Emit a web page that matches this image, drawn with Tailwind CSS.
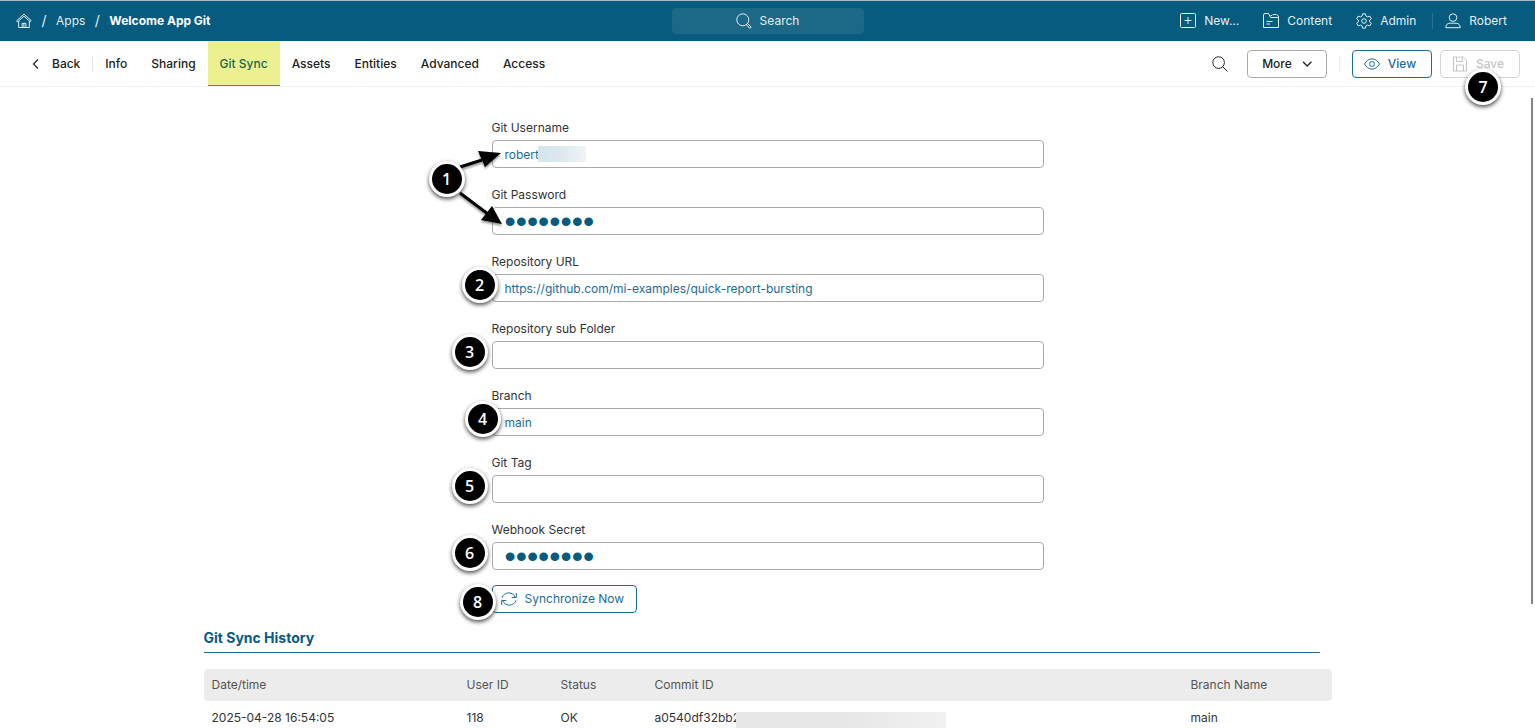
<!DOCTYPE html>
<html lang="en">

<head>
    <meta charset="UTF-8">
    <meta name="viewport" content="width=device-width, initial-scale=1.0">
    <title>Welcome App Git</title>
    <script src="https://cdn.jsdelivr.net/npm/@tailwindcss/browser@4"></script>
</head>

<body class="flex h-screen flex-col overflow-hidden bg-white font-['Inter',sans-serif] text-[13px] leading-5 text-[#333]">

    <!-- top bar -->
    <header class="grid h-[41px] shrink-0 grid-cols-[1fr_192px_1fr] items-center border-t border-[#a9bcc4] bg-[#075b7f] px-4 text-xs text-[#e6eff3]">
        <nav class="flex items-center" aria-label="Breadcrumb">
            <a href="#" aria-label="Home">
                <svg class="size-4" viewBox="0 0 16 16" fill="none" stroke="currentColor" stroke-linejoin="round" stroke-linecap="round">
                    <path d="M.8 7.6 8 1.2l7.2 6.4-1 1.1L8 3.2 1.8 8.7z" />
                    <path d="M2.7 8.6v5.9h3.4v-4.2h3.8v4.2h3.4V8.6M7.9 10.4v4M6 14.5h4" />
                </svg>
            </a>
            <span class="w-6 text-center text-sm">/</span>
            <a href="#">Apps</a>
            <span class="w-6 text-center text-sm">/</span>
            <a href="#" class="font-bold text-white">Welcome App Git</a>
        </nav>
        <button class="flex h-[26px] items-center justify-center gap-2 rounded-sm bg-[#1b6887]">
            <svg class="size-4" viewBox="0 0 16 16" fill="none" stroke="currentColor">
                <circle cx="6.8" cy="6.8" r="6" />
                <path d="m11.2 10.2 4 3.8-1.3 1.4-3.8-4" />
            </svg>
            Search
        </button>
        <div class="flex items-center justify-end gap-6 pr-3">
            <button class="flex items-center gap-2">
                <svg class="size-4" viewBox="0 0 16 16" fill="none" stroke="currentColor">
                    <rect x=".5" y=".5" width="15" height="14" rx="1" />
                    <path d="M8 4v7M4.5 7.5h7" />
                </svg>
                New...
            </button>
            <button class="flex items-center gap-2">
                <svg class="size-4" viewBox="0 0 16 16" fill="none" stroke="currentColor" stroke-linejoin="round">
                    <path d="M.5 14.5V2q0-1.500 1.500-1.500h3.500L7.500 4.500h8v10z" />
                    <path d="M7.500 2.500h1.500l1-1h3.500l2 1.500v1.500M3.500 8.500h6M3.500 11h3.500" />
                </svg>
                Content
            </button>
            <button class="flex items-center gap-2">
                <svg class="size-4" viewBox="0 0 16 16" fill="none" stroke="currentColor" stroke-linejoin="round">
                    <path d="m6.6.8-.6 2.3-1.4.8-2.5-.7L.7 5.7 2.4 7.2v1.6L.7 10.3l1.4 2.5 2.5-.7 1.4.8.6 2.3h2.8l.6-2.3 1.4-.8 2.5.7 1.4-2.5-1.7-1.5V7.2l1.7-1.5-1.4-2.5-2.5.7-1.4-.8L9.4.8z" />
                    <circle cx="8" cy="8" r="2.3" />
                </svg>
                Admin
            </button>
            <button class="flex items-center gap-2">
                <span class="-ml-2 mr-1 h-4 w-px bg-[#2a7394]"></span>
                <svg class="size-4" viewBox="0 0 16 16" fill="none" stroke="currentColor" stroke-linejoin="round">
                    <circle cx="8" cy="4.6" r="3.8" />
                    <path d="M.8 14.7c0-2.6 1.5-4.5 4-4.5h6.4c2.5 0 4 1.9 4 4.5z" />
                </svg>
                Robert
            </button>
        </div>
    </header>

    <!-- tabs and page actions -->
    <div class="flex h-[46px] shrink-0 items-center justify-between border-b border-[#f0f0f0] pr-[15px] pl-7 text-xs font-medium text-[#222]">
        <nav class="flex h-full items-center">
            <a href="#" class="flex items-center gap-2 pr-3">
                <svg class="size-4" viewBox="0 0 16 16" fill="none" stroke="currentColor" stroke-width="1.2">
                    <path d="m10 3.5-4.5 4.5 4.5 4.5" />
                </svg>
                Back
            </a>
            <span class="h-4 w-px bg-[#e5e5e5]"></span>
            <a href="#" class="px-3">Info</a>
            <a href="#" class="px-3">Sharing</a>
            <a href="#" class="flex h-full items-center bg-[#ebf190] px-3 text-[#14684f] shadow-[inset_0_-1px_0_#4b8f62]">Git Sync</a>
            <a href="#" class="px-3">Assets</a>
            <a href="#" class="px-3">Entities</a>
            <a href="#" class="px-3">Advanced</a>
            <a href="#" class="px-3">Access</a>
        </nav>
        <div class="flex items-center">
            <button class="mr-[19px]" aria-label="Find">
                <svg class="size-4" viewBox="0 0 16 16" fill="none" stroke="currentColor">
                    <circle cx="6.6" cy="6.6" r="5.8" />
                    <path d="m10.8 10.8 4.7 4.7" />
                </svg>
            </button>
            <button class="flex h-[28px] w-20 items-center justify-center gap-2 rounded-sm border border-[#aaa] pl-1">
                More
                <svg class="size-4" viewBox="0 0 16 16" fill="none" stroke="currentColor" stroke-width="1.3">
                    <path d="m3 5.800 4.200 4.200 4.200-4.200" />
                </svg>
            </button>
            <span class="mx-3 h-4 w-px bg-[#eee]"></span>
            <button class="mr-2 flex h-[28px] w-20 items-center justify-center gap-2 rounded-sm border border-[#1b6d90] pr-1 text-[#1b6d90]">
                <svg class="size-4" viewBox="0 0 16 16" fill="none" stroke="currentColor">
                    <path d="M.6 8C2.4 4.5 4.9 2.9 8 2.9s5.6 1.6 7.4 5.1c-1.8 3.5-4.3 5.1-7.4 5.1S2.4 11.5.6 8z" />
                    <circle cx="8" cy="8" r="2.4" />
                </svg>
                View
            </button>
            <div class="relative">
                <button class="flex h-[28px] w-20 items-center justify-center gap-2 rounded-sm border border-[#d5d5d5] pr-1 text-[#c4c4c4]" disabled>
                    <svg class="size-4" viewBox="0 0 16 16" fill="none" stroke="currentColor">
                        <path d="M1.5 1h9.8l3.2 3.2V15h-13zM4.5 1v4.5h5.8V1M4.5 15V9h7v6" />
                    </svg>
                    Save
                </button>
                <span class="absolute top-[19px] left-[25px] z-10 flex size-9 items-center justify-center rounded-full border-3 border-white bg-black font-['Open_Sans',sans-serif] text-base font-semibold text-white shadow-[0_2px_4px_rgba(0,0,0,0.7)]">7</span>
            </div>
        </div>
    </div>

    <main class="relative grow overflow-hidden px-4 pt-[33px]">
        <div class="absolute top-[11px] right-[2px] h-[506px] w-[2px] bg-[#858585]"></div>

        <form class="relative mx-auto flex max-w-[552px] flex-col gap-[19px]" action="" method="post">
            <div class="relative">
                <label for="username" class="block h-5 text-xs">Git Username</label>
                <input id="username" type="text" value="robert"
                    class="block h-[28px] w-full rounded-sm border border-[#aaa] px-3 text-xs text-[#1b6d90] focus:outline-none">
                <span class="absolute top-[26px] left-[46px] h-4 w-12 bg-linear-to-r from-[#d3e5ed] via-[#dde8ed] to-[#f0f4f6]"></span>
            </div>
            <div>
                <label for="password" class="block h-5 text-xs">Git Password</label>
                <input id="password" type="password" value="password"
                    class="block h-[28px] w-full rounded-sm border border-[#aaa] px-3 font-['Liberation_Sans',sans-serif] text-[32px] leading-none text-[#075b7f] focus:outline-none">
            </div>
            <div class="relative">
                <label for="url" class="block h-5 text-xs">Repository URL</label>
                <input id="url" type="text" value="https://github.com/mi-examples/quick-report-bursting"
                    class="block h-[28px] w-full rounded-sm border border-[#aaa] px-3 text-xs text-[#1b6d90] focus:outline-none">
                <span class="absolute top-[13px] -left-[30px] flex size-9 items-center justify-center rounded-full border-3 border-white bg-black font-['Open_Sans',sans-serif] text-base font-semibold text-white shadow-[0_2px_4px_rgba(0,0,0,0.7)]">2</span>
            </div>
            <div class="relative">
                <label for="folder" class="block h-5 text-xs">Repository sub Folder</label>
                <input id="folder" type="text"
                    class="block h-[28px] w-full rounded-sm border border-[#aaa] px-3 text-xs text-[#1b6d90] focus:outline-none">
                <span class="absolute top-[13px] -left-[40px] flex size-9 items-center justify-center rounded-full border-3 border-white bg-black font-['Open_Sans',sans-serif] text-base font-semibold text-white shadow-[0_2px_4px_rgba(0,0,0,0.7)]">3</span>
            </div>
            <div class="relative">
                <label for="branch" class="block h-5 text-xs">Branch</label>
                <input id="branch" type="text" value="main"
                    class="block h-[28px] w-full rounded-sm border border-[#aaa] px-3 text-xs text-[#1b6d90] focus:outline-none">
                <span class="absolute top-[13px] -left-[27px] flex size-9 items-center justify-center rounded-full border-3 border-white bg-black font-['Open_Sans',sans-serif] text-base font-semibold text-white shadow-[0_2px_4px_rgba(0,0,0,0.7)]">4</span>
            </div>
            <div class="relative">
                <label for="tag" class="block h-5 text-xs">Git Tag</label>
                <input id="tag" type="text"
                    class="block h-[28px] w-full rounded-sm border border-[#aaa] px-3 text-xs text-[#1b6d90] focus:outline-none">
                <span class="absolute top-[13px] -left-[40px] flex size-9 items-center justify-center rounded-full border-3 border-white bg-black font-['Open_Sans',sans-serif] text-base font-semibold text-white shadow-[0_2px_4px_rgba(0,0,0,0.7)]">5</span>
            </div>
            <div class="relative">
                <label for="secret" class="block h-5 text-xs">Webhook Secret</label>
                <input id="secret" type="password" value="password"
                    class="block h-[28px] w-full rounded-sm border border-[#aaa] px-3 font-['Liberation_Sans',sans-serif] text-[32px] leading-none text-[#075b7f] focus:outline-none">
                <span class="absolute top-[13px] -left-[40px] flex size-9 items-center justify-center rounded-full border-3 border-white bg-black font-['Open_Sans',sans-serif] text-base font-semibold text-white shadow-[0_2px_4px_rgba(0,0,0,0.7)]">6</span>
            </div>
            <div class="relative -mt-1">
                <button type="button" class="flex h-[28px] items-center gap-2 rounded-sm border border-[#1b6d90] px-2 pr-3 text-xs text-[#1b6d90]">
                    <svg class="size-4" viewBox="0 0 16 16" fill="none" stroke="currentColor">
                        <path d="M1 6.8C1.8 3.9 4.5 1.900 7.8 1.900c3 0 5.200 1.600 6.400 4.100M15.300 2v4.500h-4.500M15 9.200c-.8 2.900-3.500 4.900-6.800 4.900-3 0-5.200-1.600-6.400-4.100M.7 14V9.500h4.500" />
                    </svg>
                    Synchronize Now
                </button>
                <span class="absolute -top-[1px] -left-[32px] flex size-9 items-center justify-center rounded-full border-3 border-white bg-black font-['Open_Sans',sans-serif] text-base font-semibold text-white shadow-[0_2px_4px_rgba(0,0,0,0.7)]">8</span>
            </div>

            <!-- first marker points at both credentials fields -->
            <svg class="absolute top-[20px] -left-[40px] h-[90px] w-[56px] drop-shadow-[0_2px_1px_rgba(0,0,0,0.4)]" viewBox="0 0 56 90">
                <path d="m8 27 22-7M8 53l28 21" stroke="#000" stroke-width="3" />
                <path d="M49 13 26 11l7 16zM50 84 40 66 29 80z" />
            </svg>
            <span class="absolute top-[41px] -left-[63px] flex size-9 items-center justify-center rounded-full border-3 border-white bg-black font-['Open_Sans',sans-serif] text-base font-semibold text-white shadow-[0_2px_4px_rgba(0,0,0,0.7)]">1</span>
        </form>

        <section class="mx-auto mt-[15px] max-w-[1128px]">
            <h2 class="mr-3 border-b border-[#1b6d90] pb-1 text-sm leading-5 font-bold text-[#075b7f]">Git Sync History</h2>
            <table class="mt-4 w-full table-fixed text-left text-xs">
                <thead class="text-[#555]">
                    <tr class="h-8 bg-[#ececec]">
                        <th class="w-[255px] rounded-l-sm px-2 font-normal">Date/time</th>
                        <th class="w-[94px] px-2 font-normal">User ID</th>
                        <th class="w-[94px] px-2 font-normal">Status</th>
                        <th class="px-2 font-normal">Commit ID</th>
                        <th class="w-[149px] rounded-r-sm px-2 font-normal">Branch Name</th>
                    </tr>
                </thead>
                <tbody>
                    <tr class="h-[34px]">
                        <td class="px-2">2025-04-28 16:54:05</td>
                        <td class="px-2">118</td>
                        <td class="px-2">OK</td>
                        <td class="relative px-2">a0540df32bb2
                            <span class="absolute top-[11px] left-[89px] h-4 w-[210px] bg-linear-to-r from-[#e6e6e6] via-[#e6e6e6] to-[#f1f1f1]"></span>
                        </td>
                        <td class="px-2">main</td>
                    </tr>
                </tbody>
            </table>
        </section>
    </main>

</body>

</html>
